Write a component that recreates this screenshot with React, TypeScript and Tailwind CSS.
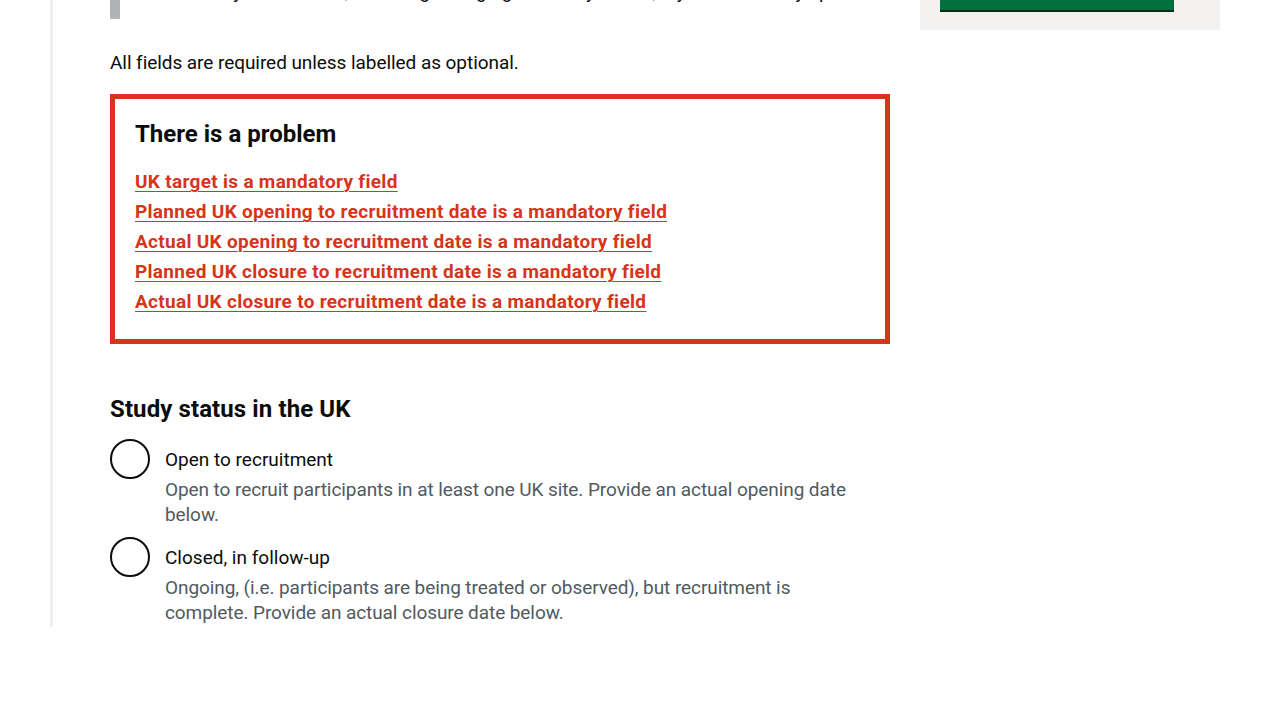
const errors = [
  "UK target is a mandatory field",
  "Planned UK opening to recruitment date is a mandatory field",
  "Actual UK opening to recruitment date is a mandatory field",
  "Planned UK closure to recruitment date is a mandatory field",
  "Actual UK closure to recruitment date is a mandatory field",
]

const statuses = [
  {
    label: "Open to recruitment",
    hint: "Open to recruit participants in at least one UK site. Provide an actual opening date below.",
  },
  {
    label: "Closed, in follow-up",
    hint: "Ongoing, (i.e. participants are being treated or observed), but recruitment is complete. Provide an actual closure date below.",
  },
]

function Radio({ label, hint }: { label: string; hint: string }) {
  return (
    <div className="flex">
      <div className="h-10 w-10 shrink-0 rounded-full border-2 border-[#0b0c0c] bg-white" />
      <div className="pl-[15px] pt-2">
        <label className="block text-[19px] leading-[25px] text-[#0b0c0c]">{label}</label>
        <p className="mt-[5px] w-[690px] text-[19px] leading-[25px] tracking-[-0.08px] text-[#505a5f]">{hint}</p>
      </div>
    </div>
  )
}

export default function App() {
  return (
    <div className="min-h-[720px] bg-white font-['Roboto',sans-serif] text-[#0b0c0c]">
      <div className="ml-[50px] flex w-[1180px] items-start gap-[30px] overflow-hidden border-l-[3px] border-[#efefef] pl-[57px]">
        <main className="-mt-[36px] w-[780px] pb-[2px]">
          <div className="border-l-[10px] border-[#b1b4b6] py-[15px] pl-[15px]">
            <p className="whitespace-nowrap text-[19px] leading-[25px]">
              You can only edit studies, including changing the study status, if you are a study sponsor or delegate.
            </p>
          </div>

          <p className="mt-[31px] text-[19px] leading-[25px] tracking-[-0.06px]">
            All fields are required unless labelled as optional.
          </p>

          <div className="mt-[19px] border-[5px] border-[#d4351c] px-[20px] pb-[22px] pt-[20px]">
            <h2 className="mb-[18px] text-[24px] font-bold leading-[30px]">There is a problem</h2>
            <ul className="flex flex-col">
              {errors.map((e) => (
                <li key={e} className="text-[19px] leading-[30px]">
                  <a
                    href="#"
                    className="font-bold tracking-[0.3px] text-[#d4351c] underline decoration-1 underline-offset-[3px]"
                  >
                    {e}
                  </a>
                </li>
              ))}
            </ul>
          </div>

          <h2 className="mt-[50px] text-[24px] font-bold leading-[30px] tracking-[0.1px]">Study status in the UK</h2>
          <div className="mt-[15px] flex flex-col gap-[10px]">
            {statuses.map((s) => (
              <Radio key={s.label} label={s.label} hint={s.hint} />
            ))}
          </div>
        </main>

        <aside className="-mt-[50px] w-[300px] bg-[#f3f2f1] px-5 pb-5 pt-5">
          <button className="h-10 w-[234px] bg-[#00703c] text-[19px] font-bold text-white shadow-[0_2px_0_#002d18]">
            Request support
          </button>
        </aside>
      </div>
    </div>
  )
}
